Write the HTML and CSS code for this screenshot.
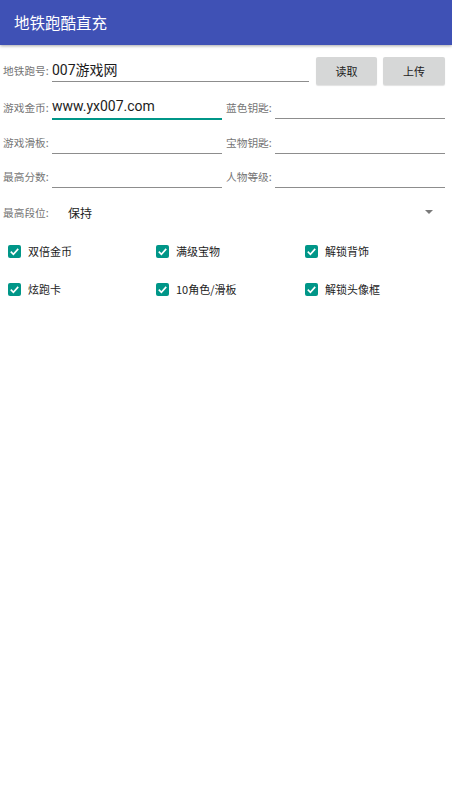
FILE: index.html
```html
<!DOCTYPE html>
<html lang="zh">
<head>
<meta charset="utf-8">
<link rel="stylesheet" href="styles.css">
</head>
<body>
<header class="appbar"><span class="title">地铁跑酷直充</span></header>
<main class="form">
  <div class="row row-first">
    <div class="field field-wide">
      <span class="label">地铁跑号:</span>
      <span class="input"><span class="value">007游戏网</span></span>
    </div>
    <button class="btn btn-read">读取</button>
    <button class="btn btn-upload">上传</button>
  </div>
  <div class="row row-2">
    <div class="field">
      <span class="label">游戏金币:</span>
      <span class="input focused"><span class="value">www.yx007.com</span></span>
    </div>
    <div class="field">
      <span class="label">蓝色钥匙:</span>
      <span class="input"></span>
    </div>
  </div>
  <div class="row row-3">
    <div class="field">
      <span class="label">游戏滑板:</span>
      <span class="input"></span>
    </div>
    <div class="field">
      <span class="label">宝物钥匙:</span>
      <span class="input"></span>
    </div>
  </div>
  <div class="row row-4">
    <div class="field">
      <span class="label">最高分数:</span>
      <span class="input"></span>
    </div>
    <div class="field">
      <span class="label">人物等级:</span>
      <span class="input"></span>
    </div>
  </div>
  <div class="row row-spinner">
    <span class="label">最高段位:</span>
    <span class="spinner-value">保持</span>
    <span class="spinner-arrow"></span>
  </div>
  <div class="checks">
    <label class="check"><span class="box"><svg viewBox="0 0 14 14" width="13" height="13"><path d="M3 7.2 L5.8 10 L11 4.2" fill="none" stroke="#fff" stroke-width="1.8"/></svg></span>双倍金币</label>
    <label class="check"><span class="box"><svg viewBox="0 0 14 14" width="13" height="13"><path d="M3 7.2 L5.8 10 L11 4.2" fill="none" stroke="#fff" stroke-width="1.8"/></svg></span>满级宝物</label>
    <label class="check"><span class="box"><svg viewBox="0 0 14 14" width="13" height="13"><path d="M3 7.2 L5.8 10 L11 4.2" fill="none" stroke="#fff" stroke-width="1.8"/></svg></span>解锁背饰</label>
    <label class="check"><span class="box"><svg viewBox="0 0 14 14" width="13" height="13"><path d="M3 7.2 L5.8 10 L11 4.2" fill="none" stroke="#fff" stroke-width="1.8"/></svg></span>炫跑卡</label>
    <label class="check"><span class="box"><svg viewBox="0 0 14 14" width="13" height="13"><path d="M3 7.2 L5.8 10 L11 4.2" fill="none" stroke="#fff" stroke-width="1.8"/></svg></span>10角色/滑板</label>
    <label class="check"><span class="box"><svg viewBox="0 0 14 14" width="13" height="13"><path d="M3 7.2 L5.8 10 L11 4.2" fill="none" stroke="#fff" stroke-width="1.8"/></svg></span>解锁头像框</label>
  </div>
</main>
</body>
</html>
```
FILE: styles.css
```css
html, body {
  margin: 0;
  padding: 0;
  background: #ffffff;
  font-family: Roboto, "Noto Sans CJK SC", sans-serif;
}

.appbar {
  height: 45px;
  background: #3f51b5;
  box-shadow: 0 1px 3px rgba(0, 0, 0, 0.35);
  display: flex;
  align-items: center;
  padding-left: 14px;
  padding-bottom: 1px;
  box-sizing: border-box;
}

.title {
  color: #ffffff;
  font-size: 15.5px;
  font-family: "Noto Sans CJK SC", sans-serif;
}

.form {
  padding: 0 7px 0 3px;
}

.row {
  display: flex;
  align-items: flex-start;
}

.row-first {
  margin-top: 12px;
  height: 28px;
}

.row-2 { margin-top: 10px; }
.row-3 { margin-top: 11px; }
.row-4 { margin-top: 10px; }

.field {
  display: flex;
  align-items: center;
  flex: 1;
  height: 24px;
}

.row-2 .field:first-child,
.row-3 .field:first-child,
.row-4 .field:first-child {
  margin-right: 4px;
}

.field-wide {
  margin-top: 1px;
  margin-right: 7px;
}

.label {
  font-family: "Noto Sans CJK SC", sans-serif;
  font-size: 10.7px;
  color: #757575;
  width: 49px;
  white-space: nowrap;
  flex: none;
}

.input {
  flex: 1;
  height: 24px;
  box-sizing: border-box;
  border-bottom: 1px solid #8d8d8d;
  display: flex;
  align-items: center;
  padding-top: 0;
}

.input.focused {
  border-bottom: 2px solid #009688;
  height: 25px;
}

.value {
  font-family: Roboto, "Noto Sans CJK SC", sans-serif;
  font-size: 14px;
  color: #1c1c1c;
  margin-top: -1px;
}

.btn {
  font-family: "Noto Sans CJK SC", sans-serif;
  font-size: 11px;
  color: #222;
  background: #d6d7d7;
  border: none;
  border-radius: 2px;
  height: 28px;
  padding: 0;
  box-shadow: 0 1px 1px rgba(0, 0, 0, 0.12);
}

.btn-read { width: 61px; margin-right: 6px; }
.btn-upload { width: 62px; }

.row-spinner {
  margin-top: 12px;
  height: 24px;
  align-items: center;
  position: relative;
}

.row-spinner .label {
  width: 65px;
}

.spinner-value {
  font-family: "Noto Sans CJK SC", sans-serif;
  font-size: 12px;
  color: #1c1c1c;
  flex: 1;
}

.spinner-arrow {
  width: 0;
  height: 0;
  border-left: 4px solid transparent;
  border-right: 4px solid transparent;
  border-top: 4px solid #7a7a7a;
  margin-right: 12px;
}

.checks {
  display: grid;
  grid-template-columns: 148px 149px 1fr;
  row-gap: 18px;
  margin-top: 17px;
  padding-left: 5px;
}

.check {
  display: flex;
  align-items: center;
  height: 20px;
  font-family: "Noto Sans CJK SC", sans-serif;
  font-size: 11px;
  color: #1c1c1c;
}

.box {
  width: 13px;
  height: 13px;
  border-radius: 2px;
  background: #009688;
  display: flex;
  align-items: center;
  justify-content: center;
  margin-right: 7px;
  flex: none;
}

.box svg {
  display: block;
}
```
